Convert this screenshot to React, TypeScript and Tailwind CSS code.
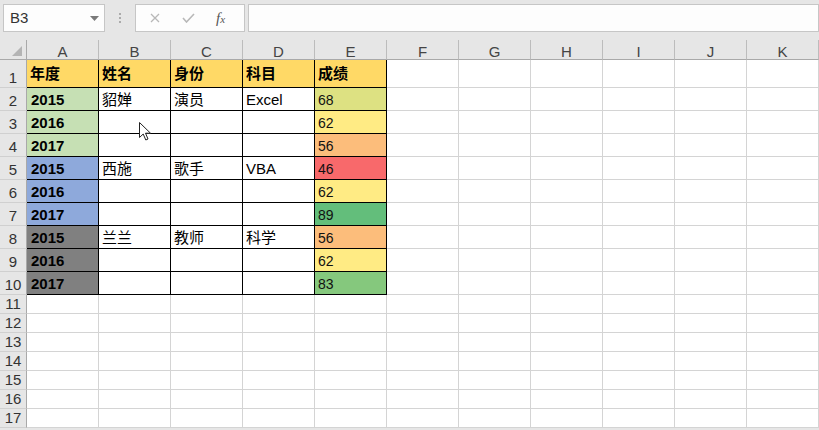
import React from 'react';

const cols = ['A', 'B', 'C', 'D', 'E', 'F', 'G', 'H', 'I', 'J', 'K'];

interface Row {
  cells: string[];
  yearBg: string;
  scoreBg: string;
}

const header = ['年度', '姓名', '身份', '科目', '成绩'];

const rows: Row[] = [
  { cells: ['2015', '貂婵', '演员', 'Excel', '68'], yearBg: 'bg-[#c6e0b4]', scoreBg: 'bg-[#dde182]' },
  { cells: ['2016', '', '', '', '62'], yearBg: 'bg-[#c6e0b4]', scoreBg: 'bg-[#ffeb84]' },
  { cells: ['2017', '', '', '', '56'], yearBg: 'bg-[#c6e0b4]', scoreBg: 'bg-[#fcbd7b]' },
  { cells: ['2015', '西施', '歌手', 'VBA', '46'], yearBg: 'bg-[#8ea9db]', scoreBg: 'bg-[#f8696b]' },
  { cells: ['2016', '', '', '', '62'], yearBg: 'bg-[#8ea9db]', scoreBg: 'bg-[#ffeb84]' },
  { cells: ['2017', '', '', '', '89'], yearBg: 'bg-[#8ea9db]', scoreBg: 'bg-[#63be7b]' },
  { cells: ['2015', '兰兰', '教师', '科学', '56'], yearBg: 'bg-[#808080]', scoreBg: 'bg-[#fcbd7b]' },
  { cells: ['2016', '', '', '', '62'], yearBg: 'bg-[#808080]', scoreBg: 'bg-[#ffeb84]' },
  { cells: ['2017', '', '', '', '83'], yearBg: 'bg-[#808080]', scoreBg: 'bg-[#85c87d]' },
];

const font = "font-['Liberation_Sans','Noto_Sans_CJK_SC',sans-serif]";

const RowHead: React.FC<{ n: number }> = ({ n }) => (
  <div className="flex items-end justify-center pb-[2px] bg-[#e6e6e6] border-r border-r-[#a9a9a9] border-b border-b-[#d0d0d0] text-[15px] leading-none text-[#333]">
    {n}
  </div>
);

const Empty: React.FC = () => <div className="border-r border-b border-[#d4d4d4] bg-white" />;

const App: React.FC = () => {
  return (
    <div className={`relative w-[819px] h-[430px] overflow-hidden bg-[#e6e6e6] ${font}`}>
      {/* formula bar */}
      <div className="flex items-start h-[40px] pt-[4px] pl-[3px]">
        <div className="flex items-center w-[102px] h-[28px] border border-[#c6c6c6] bg-[#fdfdfd] pl-[6px] pr-[5px]">
          <span className="flex-1 text-[15px] text-[#333]">B3</span>
          <svg width="9" height="5" viewBox="0 0 9 5"><path d="M0 0h9L4.5 5z" fill="#7a7a7a" /></svg>
        </div>
        <div className="flex flex-col gap-[2px] w-[30px] items-center pt-[9px]">
          <span className="w-[2px] h-[2px] bg-[#ababab]" />
          <span className="w-[2px] h-[2px] bg-[#ababab]" />
          <span className="w-[2px] h-[2px] bg-[#ababab]" />
        </div>
        <div className="flex items-center w-[110px] h-[28px] border border-[#c6c6c6] bg-[#fdfdfd]">
          <svg className="ml-[14px]" width="10" height="10" viewBox="0 0 10 10">
            <path d="M1 1l8 8M9 1l-8 8" stroke="#b8b8b8" strokeWidth="1.3" />
          </svg>
          <svg className="ml-[22px]" width="13" height="10" viewBox="0 0 13 10">
            <path d="M1 5l3.5 4L12 1" stroke="#b8b8b8" strokeWidth="1.6" fill="none" />
          </svg>
          <span className="ml-[21px] font-['Liberation_Serif',serif] italic text-[15px] text-[#555]">
            f<span className="text-[11px]">x</span>
          </span>
        </div>
        <div className="flex-1 h-[28px] ml-[3px] border border-[#c6c6c6] bg-[#fdfdfd]" />
      </div>

      {/* sheet */}
      <div className="grid grid-cols-[27px_repeat(11,72px)] grid-rows-[20px_28px_repeat(9,23px)_repeat(7,19px)] bg-white">
        {/* column headers */}
        <div className="relative bg-[#e6e6e6] border-r border-b border-[#a9a9a9]">
          <svg className="absolute right-[4px] bottom-[3px]" width="10" height="10" viewBox="0 0 10 10">
            <path d="M10 0V10H0z" fill="#b4b4b4" />
          </svg>
        </div>
        {cols.map(c => (
          <div key={c} className="flex items-center justify-center pt-[3px] bg-[#e6e6e6] border-r border-r-[#bcbcbc] border-b border-b-[#a9a9a9] text-[15px] leading-none text-[#444]">
            {c}
          </div>
        ))}

        {/* row 1 */}
        <RowHead n={1} />
        {header.map(h => (
          <div key={h} className="flex items-center pl-[3px] pt-[2px] bg-[#ffd966] border-r border-b border-black text-[15px] font-bold text-black">
            {h}
          </div>
        ))}
        {cols.slice(5).map(c => <Empty key={c} />)}

        {rows.map((r, i) => (
          <React.Fragment key={i}>
            <RowHead n={i + 2} />
            <div className={`flex items-center pl-[4px] pt-[3px] ${r.yearBg} border-r border-b border-black text-[15px] font-bold text-black`}>
              {r.cells[0]}
            </div>
            {r.cells.slice(1, 4).map((t, j) => (
              <div key={j} className="flex items-center pl-[3px] pt-[3px] bg-white border-r border-b border-black text-[15px] text-black">
                {t}
              </div>
            ))}
            <div className={`flex items-center pl-[3px] pt-[3px] ${r.scoreBg} border-r border-b border-black text-[14px] text-[#111]`}>
              {r.cells[4]}
            </div>
            {cols.slice(5).map(c => <Empty key={c} />)}
          </React.Fragment>
        ))}

        {[11, 12, 13, 14, 15, 16, 17].map(n => (
          <React.Fragment key={n}>
            <RowHead n={n} />
            {cols.map(c => <Empty key={c} />)}
          </React.Fragment>
        ))}
      </div>

      {/* mouse pointer */}
      <svg className="absolute left-[139px] top-[122px]" width="13" height="19" viewBox="0 0 13 19">
        <path d="M0.5 0.5V15.5L4.2 12L6.8 18L9 17L6.5 11.2H11.5Z" fill="white" stroke="#222" strokeWidth="1" strokeLinejoin="round" />
      </svg>
    </div>
  );
};

export default App;
